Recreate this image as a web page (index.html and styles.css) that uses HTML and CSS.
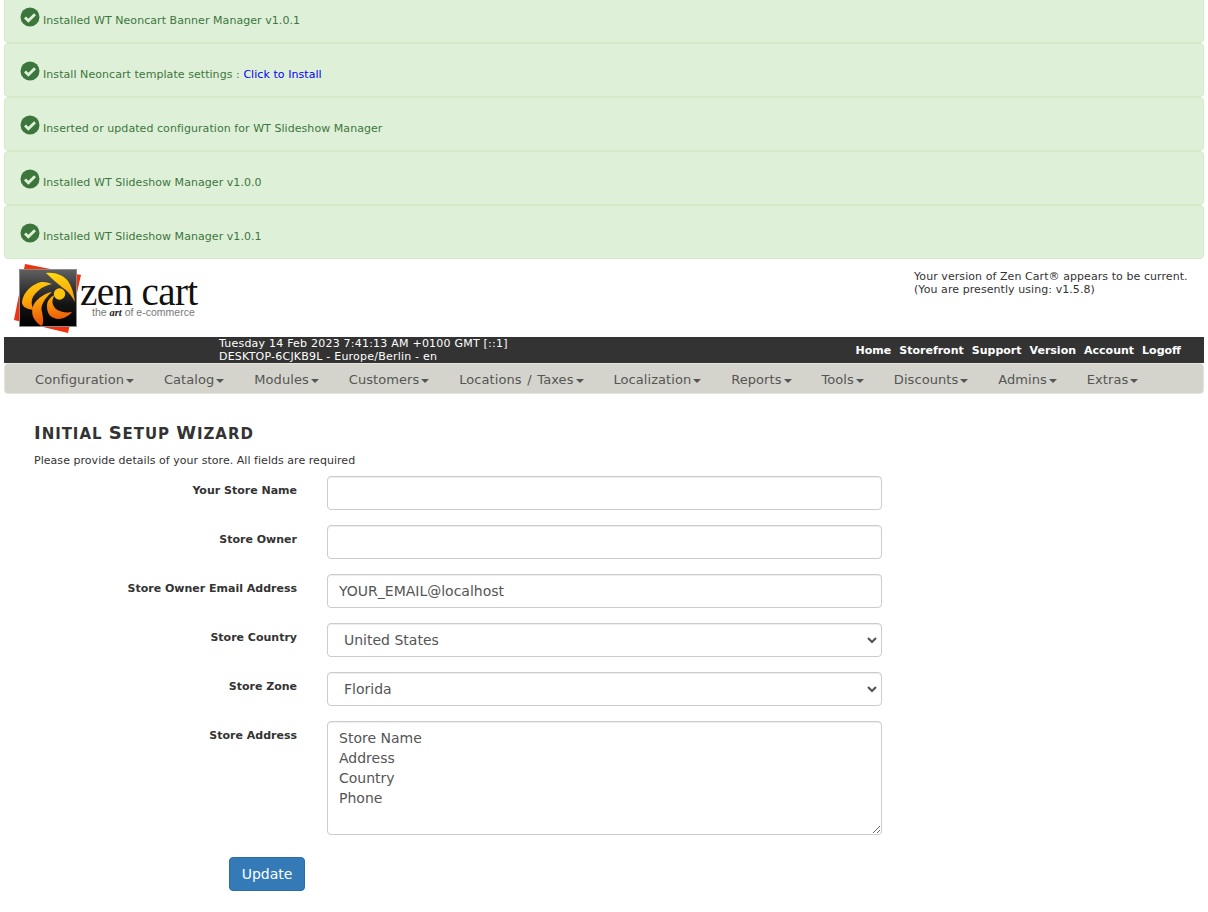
FILE: index.html
```html
<!DOCTYPE html>
<html lang="en">
<head>
  <meta charset="UTF-8" />
  <title>Initial Setup Wizard</title>
  <link rel="stylesheet" href="styles.css">
</head>

<body>
  <svg width="0" height="0" class="defs">
    <symbol id="ok" viewBox="0 0 20 20">
      <circle cx="10" cy="10" r="9.5" fill="#3c763d" />
      <path d="M5 10.4l3.4 3.4 6.6-6.6" fill="none" stroke="#dff0d8" stroke-width="2.8" />
    </symbol>
  </svg>

  <div class="messages">
    <div class="alert"><svg class="ok"><use href="#ok" /></svg>Installed WT Neoncart Banner Manager v1.0.1</div>
    <div class="alert"><svg class="ok"><use href="#ok" /></svg>Install Neoncart template settings : <a href="#">Click to Install</a></div>
    <div class="alert"><svg class="ok"><use href="#ok" /></svg>Inserted or updated configuration for WT Slideshow Manager</div>
    <div class="alert"><svg class="ok"><use href="#ok" /></svg>Installed WT Slideshow Manager v1.0.0</div>
    <div class="alert"><svg class="ok"><use href="#ok" /></svg>Installed WT Slideshow Manager v1.0.1</div>
  </div>

  <div class="header">
    <svg class="logo" width="186" height="74" viewBox="0 0 186 74">
      <defs>
        <linearGradient id="swirl" gradientUnits="userSpaceOnUse" x1="30" y1="12" x2="36" y2="62">
          <stop offset="0" stop-color="#ffd80f" />
          <stop offset="0.5" stop-color="#fca40a" />
          <stop offset="1" stop-color="#ea4f08" />
        </linearGradient>
        <linearGradient id="tile" x1="0" y1="0" x2="0" y2="1">
          <stop offset="0" stop-color="#606060" />
          <stop offset="0.6" stop-color="#151515" />
          <stop offset="1" stop-color="#000" />
        </linearGradient>
      </defs>
      <polygon points="11,2 67,13 54,71 0,58" fill="#f5300c" />
      <rect x="5.5" y="7.5" width="57" height="57" fill="url(#tile)" stroke="#8a8a8a" />
      <g fill="url(#swirl)">
        <path d="M32 11C41 10 49 13 54 19C58 25 60 32 61 40C57 33 54 29 49 26C44 22 38 17 32 11Z" />
        <path d="M38 22C32 20 27 19 22 22C15 25 9 32 8 40C8 44 11 47 20 48C16 41 17 35 24 29C28 25 33 23 38 22Z" />
        <path d="M38 30C31 31 24 36 20 42C17 48 18 54 21 58C23 61 25 63 28 64C30 60 29 55 28 50C26 44 30 37 38 30Z" />
        <path d="M41 33C36 35 33 39 33 44C33 50 35 54 40 56C45 58 52 57 58 50C52 51 46 50 42 47C38 43 37 38 41 33Z" />
      </g>
      <circle cx="45.5" cy="32" r="5.7" fill="#fcc40e" />
      <text class="logo-name" x="66" y="43">zen cart</text>
      <text class="logo-tag" x="78" y="54">the <tspan class="logo-art">art</tspan> of e-commerce</text>
    </svg>
    <div class="version">Your version of Zen Cart&reg; appears to be current.<br>(You are presently using: v1.5.8)</div>
  </div>

  <div class="topbar">
    <div class="server">Tuesday 14 Feb 2023 7:41:13 AM +0100 GMT [::1]<br>DESKTOP-6CJKB9L - Europe/Berlin - en</div>
    <div class="toplinks">
      <a href="#">Home</a>
      <a href="#">Storefront</a>
      <a href="#">Support</a>
      <a href="#">Version</a>
      <a href="#">Account</a>
      <a href="#">Logoff</a>
    </div>
  </div>

  <ul class="menu">
    <li>Configuration<span class="caret"></span></li>
    <li>Catalog<span class="caret"></span></li>
    <li>Modules<span class="caret"></span></li>
    <li>Customers<span class="caret"></span></li>
    <li class="wide">Locations / Taxes<span class="caret"></span></li>
    <li>Localization<span class="caret"></span></li>
    <li>Reports<span class="caret"></span></li>
    <li>Tools<span class="caret"></span></li>
    <li>Discounts<span class="caret"></span></li>
    <li>Admins<span class="caret"></span></li>
    <li>Extras<span class="caret"></span></li>
  </ul>

  <div class="page">
    <h1><span class="cap">I</span>nitial <span class="cap">S</span>etup <span class="cap">W</span>izard</h1>
    <p class="intro">Please provide details of your store. All fields are required</p>

    <form class="wizard">
      <label for="storeName">Your Store Name</label>
      <input id="storeName" type="text">

      <label for="storeOwner">Store Owner</label>
      <input id="storeOwner" type="text">

      <label for="ownerEmail">Store Owner Email Address</label>
      <input id="ownerEmail" type="text" value="YOUR_EMAIL@localhost">

      <label for="country">Store Country</label>
      <select id="country">
        <option>United States</option>
      </select>

      <label for="zone">Store Zone</label>
      <select id="zone">
        <option>Florida</option>
      </select>

      <label for="address">Store Address</label>
      <textarea id="address">Store Name
Address
Country
Phone</textarea>

      <button type="submit">Update</button>
    </form>
  </div>
</body>
</html>
```

FILE: styles.css
```css
body {
  font-family: "DejaVu Sans", Verdana, sans-serif;
  font-size: 11px;
  color: #333;
  background-color: #fff;
  margin: 0;
  padding: 0 4px;
}

a {
  text-decoration: none;
}

.defs {
  display: block;
}

/* the page is scrolled a little, first alert is cut off at the top */
.messages {
  margin-top: -11px;
}

.alert {
  height: 54px;
  box-sizing: border-box;
  padding: 17px 15px 0;
  line-height: 22px;
  letter-spacing: 0.06px;
  color: #3c763d;
  background-color: #dff0d8;
  border: 1px solid #d6e9c6;
  border-radius: 4px;
}

.alert a {
  color: #00f;
}

.ok {
  width: 20px;
  height: 20px;
  margin-right: 3px;
  vertical-align: -3px;
}

.header {
  display: flex;
  justify-content: space-between;
  height: 78px;
}

.logo {
  margin: 3px 0 0 10px;
}

.logo-name {
  font-family: "Liberation Serif", serif;
  font-size: 39px;
  letter-spacing: -0.6px;
  fill: #111;
}

.logo-tag {
  font-family: "Liberation Sans", sans-serif;
  font-size: 10.5px;
  fill: #777;
}

.logo-art {
  font-family: "Liberation Serif", serif;
  font-style: italic;
  font-weight: bold;
  fill: #222;
}

.version {
  width: 290px;
  padding-top: 11px;
  line-height: 13px;
  letter-spacing: 0.07px;
}

.topbar {
  display: flex;
  justify-content: space-between;
  align-items: center;
  height: 26px;
  padding: 0 23px 0 215px;
  color: #fff;
  background-color: #333;
}

.server {
  line-height: 13px;
  letter-spacing: 0.22px;
}

.toplinks {
  display: flex;
  gap: 8px;
  font-weight: bold;
}

.toplinks a {
  color: #fff;
}

.menu {
  display: flex;
  height: 31px;
  box-sizing: border-box;
  margin: 0 0 26px;
  padding: 0 15px;
  list-style: none;
  font-size: 13px;
  line-height: 31px;
  letter-spacing: 0.06px;
  color: #555;
  background-color: #d4d4cc;
  border: 1px solid #e4e4de;
  border-radius: 4px;
}

.menu li {
  padding: 0 15px;
}

.menu .wide {
  word-spacing: 1.5px;
}

.caret {
  display: inline-block;
  margin-left: 2px;
  vertical-align: middle;
  border-top: 4px solid #555;
  border-left: 4px solid transparent;
  border-right: 4px solid transparent;
}

.page {
  padding: 0 30px;
}

/* small caps by hand, the browser's own come out too small */
h1 {
  margin: 0;
  font-size: 15px;
  line-height: 25px;
  font-weight: bold;
  text-transform: uppercase;
  letter-spacing: 0.95px;
  color: #333;
}

.cap {
  font-size: 18px;
}

.intro {
  margin: 6px 0 7px;
  line-height: 16px;
  letter-spacing: 0.04px;
}

.wizard {
  display: grid;
  grid-template-columns: 263px 555px;
  column-gap: 30px;
  row-gap: 15px;
  width: 848px;
}

.wizard label {
  padding-top: 8px;
  font-weight: bold;
  line-height: 14px;
  text-align: right;
}

input, select, textarea {
  width: 100%;
  height: 34px;
  box-sizing: border-box;
  padding: 6px 11px;
  font-family: "DejaVu Sans", Verdana, sans-serif;
  font-size: 14px;
  line-height: 20px;
  color: #555;
  background-color: #fff;
  border: 1px solid #ccc;
  border-radius: 4px;
  box-shadow: inset 0 1px 1px rgba(0, 0, 0, 0.075);
}

select {
  appearance: none;
  padding: 6px 24px 6px 16px;
  background: #fff url("data:image/svg+xml,%3Csvg xmlns='http://www.w3.org/2000/svg' width='10' height='7'%3E%3Cpath d='M1 1l4 4 4-4' fill='none' stroke='%23555' stroke-width='2.2'/%3E%3C/svg%3E") no-repeat right 4px center;
}

textarea {
  height: 114px;
  display: block;
}

button {
  grid-column: 1 / 3;
  justify-self: start;
  margin: 7px 0 0 195px;
  width: 76px;
  height: 34px;
  padding: 0;
  font-family: "DejaVu Sans", Verdana, sans-serif;
  font-size: 14px;
  color: #fff;
  background-color: #337ab7;
  border: 1px solid #2e6da4;
  border-radius: 4px;
  cursor: pointer;
}
```
